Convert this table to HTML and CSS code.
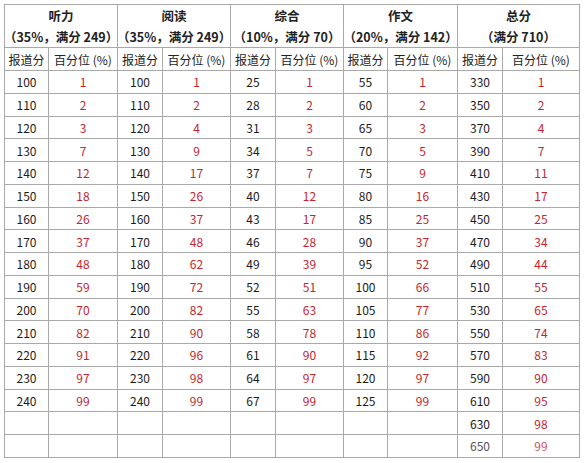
FILE: index.html
```html
<!DOCTYPE html>
<html lang="zh">
<head>
<meta charset="utf-8">
<title>分数百分位</title>
<link rel="stylesheet" href="styles.css">
</head>
<body>
<div class="sheet">
  <div class="grp">听力<br>（35%，满分 249）</div>
  <div class="grp">阅读<br>（35%，满分 249）</div>
  <div class="grp">综合<br>（10%，满分 70）</div>
  <div class="grp">作文<br>（20%，满分 142）</div>
  <div class="grp">总分<br>（满分 710）</div>

  <div class="ch">报道分</div><div class="ch">百分位 (%)</div>
  <div class="ch">报道分</div><div class="ch">百分位 (%)</div>
  <div class="ch">报道分</div><div class="ch">百分位 (%)</div>
  <div class="ch">报道分</div><div class="ch">百分位 (%)</div>
  <div class="ch">报道分</div><div class="ch">百分位 (%)</div>

  <div class="s">100</div><div class="p">1</div><div class="s">100</div><div class="p">1</div><div class="s">25</div><div class="p">1</div><div class="s">55</div><div class="p">1</div><div class="s">330</div><div class="p">1</div>
  <div class="s">110</div><div class="p">2</div><div class="s">110</div><div class="p">2</div><div class="s">28</div><div class="p">2</div><div class="s">60</div><div class="p">2</div><div class="s">350</div><div class="p">2</div>
  <div class="s">120</div><div class="p">3</div><div class="s">120</div><div class="p">4</div><div class="s">31</div><div class="p">3</div><div class="s">65</div><div class="p">3</div><div class="s">370</div><div class="p">4</div>
  <div class="s">130</div><div class="p">7</div><div class="s">130</div><div class="p">9</div><div class="s">34</div><div class="p">5</div><div class="s">70</div><div class="p">5</div><div class="s">390</div><div class="p">7</div>
  <div class="s">140</div><div class="p">12</div><div class="s">140</div><div class="p">17</div><div class="s">37</div><div class="p">7</div><div class="s">75</div><div class="p">9</div><div class="s">410</div><div class="p">11</div>
  <div class="s">150</div><div class="p">18</div><div class="s">150</div><div class="p">26</div><div class="s">40</div><div class="p">12</div><div class="s">80</div><div class="p">16</div><div class="s">430</div><div class="p">17</div>
  <div class="s">160</div><div class="p">26</div><div class="s">160</div><div class="p">37</div><div class="s">43</div><div class="p">17</div><div class="s">85</div><div class="p">25</div><div class="s">450</div><div class="p">25</div>
  <div class="s">170</div><div class="p">37</div><div class="s">170</div><div class="p">48</div><div class="s">46</div><div class="p">28</div><div class="s">90</div><div class="p">37</div><div class="s">470</div><div class="p">34</div>
  <div class="s">180</div><div class="p">48</div><div class="s">180</div><div class="p">62</div><div class="s">49</div><div class="p">39</div><div class="s">95</div><div class="p">52</div><div class="s">490</div><div class="p">44</div>
  <div class="s">190</div><div class="p">59</div><div class="s">190</div><div class="p">72</div><div class="s">52</div><div class="p">51</div><div class="s">100</div><div class="p">66</div><div class="s">510</div><div class="p">55</div>
  <div class="s">200</div><div class="p">70</div><div class="s">200</div><div class="p">82</div><div class="s">55</div><div class="p">63</div><div class="s">105</div><div class="p">77</div><div class="s">530</div><div class="p">65</div>
  <div class="s">210</div><div class="p">82</div><div class="s">210</div><div class="p">90</div><div class="s">58</div><div class="p">78</div><div class="s">110</div><div class="p">86</div><div class="s">550</div><div class="p">74</div>
  <div class="s">220</div><div class="p">91</div><div class="s">220</div><div class="p">96</div><div class="s">61</div><div class="p">90</div><div class="s">115</div><div class="p">92</div><div class="s">570</div><div class="p">83</div>
  <div class="s">230</div><div class="p">97</div><div class="s">230</div><div class="p">98</div><div class="s">64</div><div class="p">97</div><div class="s">120</div><div class="p">97</div><div class="s">590</div><div class="p">90</div>
  <div class="s">240</div><div class="p">99</div><div class="s">240</div><div class="p">99</div><div class="s">67</div><div class="p">99</div><div class="s">125</div><div class="p">99</div><div class="s">610</div><div class="p">95</div>
  <div class="s"></div><div class="p"></div><div class="s"></div><div class="p"></div><div class="s"></div><div class="p"></div><div class="s"></div><div class="p"></div><div class="s">630</div><div class="p">98</div>
  <div class="s"></div><div class="p"></div><div class="s"></div><div class="p"></div><div class="s"></div><div class="p"></div><div class="s"></div><div class="p"></div><div class="s faint">650</div><div class="p faint-red">99</div>
</div>
</body>
</html>
```
FILE: styles.css
```css
html, body {
  margin: 0;
  padding: 0;
  background: #ffffff;
}
body {
  padding: 4px 0 0 4px;
  font-family: "Noto Sans CJK SC", "Noto Sans", sans-serif;
  font-size: 12px;
  color: #1c1c1c;
}
.sheet {
  display: grid;
  grid-template-columns: 43px 68px 44px 67px 44px 67px 43px 69px 44px 76px;
  grid-template-rows: 42px 22px repeat(17, 21.76px);
  gap: 1px;
  padding: 1px;
  background: #a9a9a9;
  width: max-content;
}
.sheet > div {
  background: #ffffff;
  display: flex;
  align-items: center;
  justify-content: center;
  text-align: center;
  white-space: nowrap;
}
.grp {
  grid-column: span 2;
  font-weight: bold;
  font-size: 12.5px;
  line-height: 21px;
  color: #222222;
}
.ch {
  color: #222222;
}
.p {
  color: #c4262e;
}
.faint {
  color: #555555;
}
.faint-red {
  color: #d0555a;
}
```
